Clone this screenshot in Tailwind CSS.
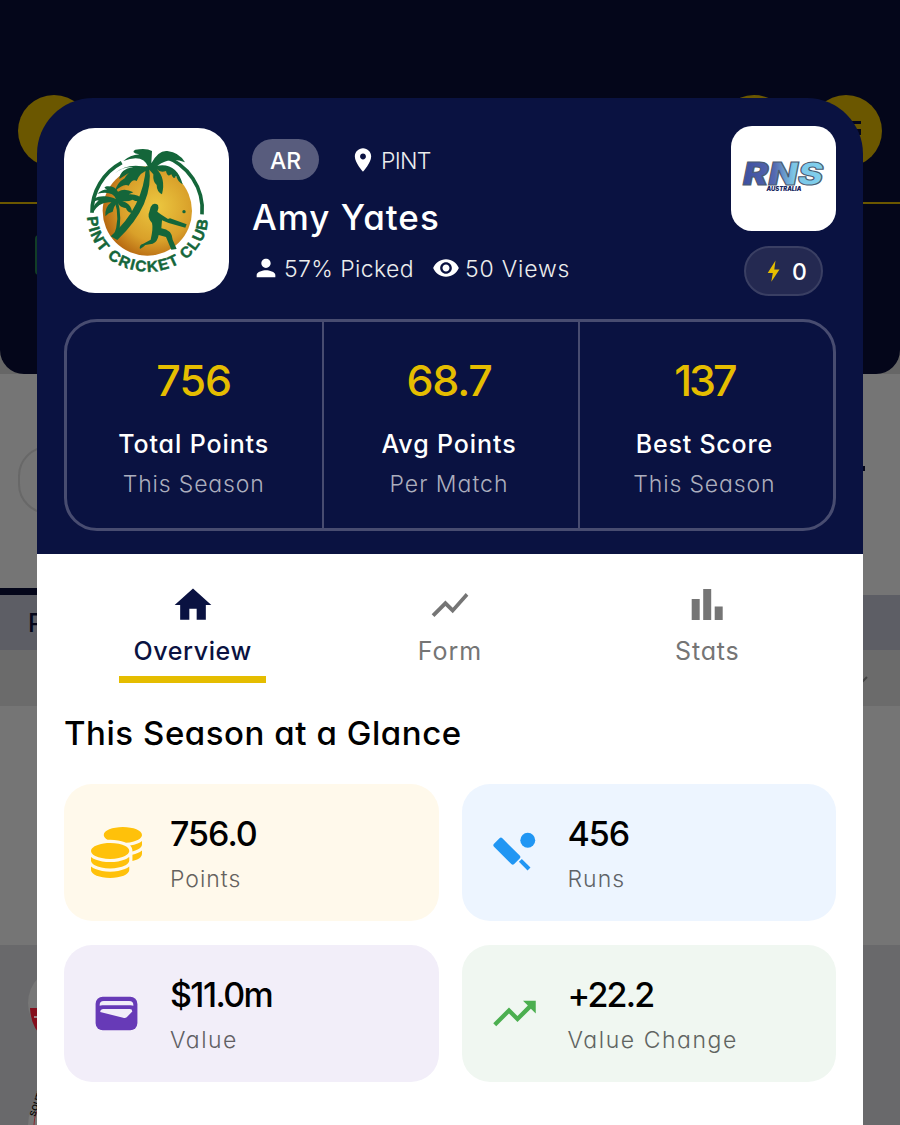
<!DOCTYPE html>
<html lang="en">
<head>
  <meta charset="UTF-8" />
  <meta name="viewport" content="width=device-width, initial-scale=1.0" />
  <title>Player Profile</title>
  <script src="https://cdn.jsdelivr.net/npm/@tailwindcss/browser@4"></script>
</head>
<body class="relative h-[1125px] w-[900px] overflow-hidden bg-[#757575] font-['Inter',sans-serif] [font-feature-settings:'cv11']">

  <!-- Dimmed page behind the sheet -->
  <div class="flex h-full flex-col">
    <div class="bg-[#666666]">
      <div class="relative h-[374px] rounded-b-3xl bg-[#04061a]">
        <div class="flex h-[204px] items-start border-b-2 border-[#6b5700] px-[18px] pt-[95px]">
          <div class="size-[72px] rounded-full bg-[#6b5700]"></div>
          <div class="-mt-[9px] ml-7 text-[34px] leading-[50px] font-medium tracking-[0.5px] text-[#777777]">My Team</div>
          <div class="ml-auto size-[72px] rounded-full bg-[#6b5700]"></div>
          <div class="ml-5 flex size-[72px] items-center justify-center rounded-full bg-[#6b5700]">
            <svg class="size-8" viewBox="0 0 32 32" fill="#04061a"><path d="M2 6h29v3H2zM2 14h29v6H2z" /></svg>
          </div>
        </div>
        <div class="mt-[31px] ml-[35px] h-10 w-20 rounded bg-[#123d26]"></div>
      </div>
    </div>
    <div class="flex h-[214px] justify-between px-[18px] pt-[72px]">
      <div class="h-[68px] w-[420px] rounded-[30px] border-2 border-[#686868]"></div>
      <div class="mt-5 h-[5px] w-[18px] -translate-x-[17px] bg-[#04061a]"></div>
    </div>
    <div class="h-[7px] w-1/2 bg-[#04061a]"></div>
    <div class="flex h-[55px] items-center bg-[#5d5e65] pt-1 pl-7 text-[25px] font-medium text-[#04061a]">Player</div>
    <div class="flex h-[57px] items-center justify-end bg-[#6b6b6b] pt-1.5 pr-8">
      <svg class="size-5" viewBox="0 0 20 20" fill="none" stroke="#444444" stroke-width="2"><path d="M4 7l7 7 8-8" /></svg>
    </div>
    <div class="h-[239px]"></div>
    <div class="flex-1 bg-[#69696b] px-7 pt-6">
      <svg class="h-[156px] w-20" viewBox="0 0 80 156">
        <circle cx="36" cy="34" r="36" fill="#777777" />
        <path d="M2 39h40v28H14Q3 58 2 39z" fill="#850f1c" />
        <path d="M6 48h8" stroke="#aaaaaa" stroke-width="1.5" />
        <circle cx="40" cy="156" r="40" fill="#777777" />
        <circle cx="40" cy="156" r="34" fill="none" stroke="#8d2a30" stroke-width="1" />
        <text transform="translate(7 148) rotate(-72)" font-family="Liberation Sans" font-size="8.5" font-weight="700" fill="#080808">SOUTH</text>
      </svg>
    </div>
  </div>

  <!-- Player sheet -->
  <div class="absolute top-[98px] left-[37px] flex h-[1027px] w-[826px] flex-col">
    <div class="h-[456px] rounded-t-[56px] bg-[#0a1241] px-[27px] pt-[30px]">
      <div class="flex items-start">
        <div class="flex size-[165px] items-center justify-center rounded-[31px] bg-white">
          <!-- Club crest -->
          <svg class="ml-0.5 h-[140px] w-[135px]" viewBox="0 0 405 420">
            <defs>
              <radialGradient id="sun" cx="0.6" cy="0.45" r="0.6">
                <stop offset="0" stop-color="#ecc840" />
                <stop offset="0.65" stop-color="#d9a02a" />
                <stop offset="1" stop-color="#b86a12" />
              </radialGradient>
              <path id="crest-arc" d="M22 228A181 166 0 0 0 384 224" />
            </defs>
            <circle cx="202" cy="210" r="134" fill="url(#sun)" />
            <path d="M36 215A168 168 0 0 1 125 65M250 46A168 168 0 0 1 366 220" fill="none" stroke="#14663a" stroke-width="11" />
            <g fill="#14663a">
              <path d="M207 76Q225 190 112 297L92 286Q190 200 198 76z" />
              <path transform="translate(0 -8)" d="M205 87Q190 45 130 68Q150 50 178 48Q150 42 166 34Q200 28 216 38L214 75Q235 35 262 38Q298 42 315 72Q270 54 232 82Q290 72 308 138Q292 128 288 112Q282 128 274 108Q262 118 258 98Q240 104 230 92Q258 120 246 168Q230 160 230 140Q218 130 220 108L208 94Q180 100 170 128Q158 120 146 142Q130 134 104 160Q112 132 134 120Q146 92 200 88Q165 88 118 122Q120 92 160 86Q130 84 105 105Q140 72 205 87z" />
              <path d="M104 180Q122 235 100 287L114 290Q128 230 113 178z" />
              <path d="M108 174Q98 148 52 158Q70 144 82 146Q66 140 80 136Q104 134 114 152Q134 140 160 154L146 160Q176 158 190 178Q170 184 158 176Q140 184 118 178Q156 186 156 216Q142 214 138 202Q120 200 112 184Q100 198 98 212Q86 214 76 226Q74 198 94 184Q58 180 38 216Q34 198 56 178Q44 178 34 190Q36 166 70 166Q84 164 108 174z" />
              <path d="M212 198Q220 182 234 192Q238 202 232 212L242 220L264 234L270 232L320 250L316 260L266 246L246 238L244 262Q276 266 278 296L290 324L274 326L258 288L236 282Q232 304 218 308L196 312Q188 320 180 324Q176 312 190 308L212 296Q220 262 216 246Q200 228 208 212z" />
              <circle cx="312" cy="212" r="5" />
            </g>
            <text font-family="Liberation Sans" font-size="46" font-weight="700" fill="#14663a" stroke="#14663a" stroke-width="1.5"><textPath href="#crest-arc" textLength="532">PINT CRICKET CLUB</textPath></text>
          </svg>
        </div>

        <div class="ml-[23px] flex flex-col pt-[11px] text-white">
          <div class="flex h-[41px] items-center">
            <div class="flex h-[41px] w-[67px] items-center justify-center rounded-full bg-[#585c7d] pt-1 text-[23px] font-medium">AR</div>
            <svg class="ml-[30px] size-7" viewBox="0 0 24 24" fill="currentColor"><path d="M12 2C8.13 2 5 5.13 5 9c0 5.25 7 13 7 13s7-7.75 7-13c0-3.87-3.13-7-7-7zm0 9.5c-1.38 0-2.5-1.12-2.5-2.5s1.12-2.5 2.5-2.5 2.5 1.12 2.5 2.5-1.12 2.5-2.5 2.5z" /></svg>
            <span class="ml-1 pt-1 text-[23px] font-light tracking-[-0.7px] text-[#eceded]">PINT</span>
          </div>
          <div class="mt-3 text-[35px] leading-[50px] font-medium tracking-[1px]">Amy Yates</div>
          <div class="mt-[10px] flex items-center leading-[34px] font-light text-[#eceded]">
            <svg class="-mt-0.5 size-7 text-white" viewBox="0 0 24 24" fill="currentColor"><path d="M12 12c2.21 0 4-1.79 4-4s-1.79-4-4-4-4 1.79-4 4 1.79 4 4 4zm0 2c-2.67 0-8 1.34-8 4v2h16v-2c0-2.66-5.33-4-8-4z" /></svg>
            <span class="ml-1 w-[131px] text-[23px] tracking-[0.4px] whitespace-nowrap">57% Picked</span>
            <svg class="-mt-0.5 ml-[17px] size-7 text-white" viewBox="0 0 24 24" fill="currentColor"><path d="M12 4.5C7 4.5 2.73 7.61 1 12c1.73 4.39 6 7.5 11 7.5s9.27-3.11 11-7.5c-1.73-4.39-6-7.5-11-7.5zM12 17c-2.76 0-5-2.24-5-5s2.24-5 5-5 5 2.24 5 5-2.24 5-5 5zm0-8c-1.66 0-3 1.34-3 3s1.34 3 3 3 3-1.34 3-3-1.34-3-3-3z" /></svg>
            <span class="ml-[5px] text-[23px] tracking-[0.8px]">50 Views</span>
          </div>
        </div>

        <div class="-mt-0.5 ml-auto flex flex-col items-center">
          <div class="flex size-[105px] items-center justify-center rounded-[21px] bg-white">
            <svg class="-mt-[7px] h-[50px] w-[95px]" viewBox="0 0 95 50">
              <defs>
                <linearGradient id="rns" x1="0" x2="1">
                  <stop offset="0" stop-color="#3d4fa0" />
                  <stop offset="0.38" stop-color="#5468b0" />
                  <stop offset="0.62" stop-color="#7cc6e6" />
                  <stop offset="1" stop-color="#80d0ee" />
                </linearGradient>
              </defs>
              <text x="7" y="35" textLength="80" lengthAdjust="spacingAndGlyphs" font-family="Inter" font-size="31" font-weight="900" font-style="italic" fill="url(#rns)" stroke="#4a5a70" stroke-width="1">RNS</text>
              <text x="30.5" y="40.5" textLength="35" lengthAdjust="spacingAndGlyphs" font-family="Inter" font-size="5.5" font-weight="900" font-style="italic" fill="#17265f">AUSTRALIA</text>
            </svg>
          </div>
          <div class="mt-[15px] flex h-[50px] w-[79px] items-center justify-center rounded-full border-2 border-[#3a3f63] bg-[#242951]">
            <svg class="size-7" viewBox="0 0 28 28" fill="#e5bd00"><path d="M15.5 3.500L7.700 16H12.800L11.300 24.800L19.500 12.500H14.300z" /></svg>
            <span class="ml-1 pt-0.5 text-[23px] font-medium text-white">0</span>
          </div>
        </div>
      </div>

      <!-- Headline numbers -->
      <div class="mt-[23px] grid h-[212px] grid-cols-3 rounded-[33px] border-[3px] border-[#484c70] text-center">
        <div class="pt-[34px] pr-0.5">
          <div class="text-[43px] leading-[48px] font-medium tracking-[-1px] text-[#e5bd00]">756</div>
          <div class="mt-[22px] text-[25px] leading-9 font-medium tracking-[0.9px] text-white">Total Points</div>
          <div class="mt-1.5 text-[23px] leading-8 font-light tracking-[0.85px] text-[#acaebe]">This Season</div>
        </div>
        <div class="border-l-2 border-[#484c70] pt-[34px] pr-1">
          <div class="text-[43px] leading-[48px] font-medium tracking-[-1.2px] text-[#e5bd00]">68.7</div>
          <div class="mt-[22px] text-[25px] leading-9 font-medium tracking-[0.9px] text-white">Avg Points</div>
          <div class="mt-1.5 text-[23px] leading-8 font-light tracking-[1px] text-[#acaebe]">Per Match</div>
        </div>
        <div class="border-l-2 border-[#484c70] pt-[34px] pr-1">
          <div class="text-[43px] leading-[48px] font-medium tracking-[-3px] text-[#e5bd00]">137</div>
          <div class="mt-[22px] text-[25px] leading-9 font-medium tracking-[0.8px] text-white">Best Score</div>
          <div class="mt-1.5 text-[23px] leading-8 font-light tracking-[0.85px] text-[#acaebe]">This Season</div>
        </div>
      </div>
    </div>

    <div class="flex-1 bg-white px-[27px] pt-7">
      <!-- Tabs -->
      <div class="grid grid-cols-3 text-[25px] leading-9 text-[#757575]">
        <div class="flex flex-col items-center font-medium text-[#0a1241]">
          <svg class="size-11 translate-y-px" viewBox="0 0 24 24" fill="currentColor"><path d="M10 20v-6h4v6h5v-8h3L12 3 2 12h3v8z" /></svg>
          <span class="mt-[7px] tracking-[0.6px]">Overview</span>
          <div class="mt-[7px] h-[7px] w-[147px] bg-[#e5bd00]"></div>
        </div>
        <div class="flex flex-col items-center">
          <svg class="size-11 translate-y-px" viewBox="0 0 24 24" fill="currentColor"><path d="M3.5 18.49l6-6.01 4 4L22 6.92l-1.41-1.41-7.09 7.97-4-4L2 16.99z" /></svg>
          <span class="mt-[7px] tracking-[1px]">Form</span>
        </div>
        <div class="flex flex-col items-center">
          <svg class="size-11" viewBox="0 0 44 44" fill="currentColor"><path d="M6.7 17h8v21h-8zM18.2 7h8v31h-8zM29.7 24.5h8V38h-8z" /></svg>
          <span class="mt-[7px] tracking-[0.8px]">Stats</span>
        </div>
      </div>

      <h2 class="mt-[26px] text-[33px] leading-[48px] font-medium tracking-[0.55px] text-black">This Season at a Glance</h2>

      <!-- Season cards -->
      <div class="mt-[27px] grid grid-cols-2 gap-x-[23px] gap-y-6">
        <div class="flex h-[137px] items-center gap-7 rounded-[28px] bg-[#fff9eb] pl-[27px]">
          <svg class="size-[51px]" viewBox="0 0 512 512" fill="#ffc10a"><path d="M512 80c0 18-14.3 34.6-38.4 48c-29.1 16.1-72.5 27.5-122.3 30.9c-3.7-1.8-7.4-3.5-11.3-5C300.6 137.4 248.2 128 192 128c-8.3 0-16.4 .2-24.5 .6l-1.1-.6C142.3 114.6 128 98 128 80c0-44.2 86-80 192-80S512 35.8 512 80zM160.7 161.1c10.2-.7 20.7-1.1 31.3-1.1c62.2 0 117.4 12.3 152.5 31.4C369.3 204.9 384 221.7 384 240c0 4-.7 7.9-2.1 11.7c-4.6 13.2-17 25.3-35 35.5c-.5 .2-.9 .5-1.3 .8c-35 19.4-90.8 32-153.6 32c-59.6 0-112.9-11.3-148.2-29.1c-1.9-.9-3.7-1.9-5.5-2.9C14.3 274.6 0 258 0 240c0-34.8 53.4-64.5 128-75.4c10.5-1.5 21.4-2.7 32.7-3.5zM416 240c0-21.9-10.6-39.9-24.1-53.4c28.3-4.4 54.2-11.4 76.2-20.5c16.3-6.8 31.5-15.2 43.9-25.5V176c0 19.3-16.5 37.1-43.8 50.9c-14.6 7.4-32.4 13.7-52.4 18.5c.1-1.8 .2-3.5 .2-5.3zm-32 96c0 18-14.3 34.6-38.4 48c-1.8 1-3.6 1.9-5.5 2.9C304.9 404.7 251.6 416 192 416c-62.8 0-118.6-12.6-153.6-32C14.3 370.6 0 354 0 336V300.6c12.5 10.3 27.6 18.7 43.9 25.5C83.4 342.6 135.8 352 192 352s108.6-9.4 148.1-25.9c7.8-3.2 15.3-6.9 22.4-10.9c6.1-3.4 11.8-7.2 17.2-11.2c1.5-1.1 2.9-2.3 4.3-3.4V336zm32 0V278.1c19-4.2 36.5-9.5 52.1-16c16.3-6.8 31.5-15.2 43.9-25.5V272c0 10.5-5 21-14.9 30.9c-16.3 16.3-45 29.7-81.3 38.4c.1-1.7 .2-3.5 .2-5.3zM192 448c56.2 0 108.6-9.4 148.1-25.9c16.3-6.8 31.5-15.2 43.9-25.5V432c0 44.2-86 80-192 80S0 476.2 0 432V396.6c12.5 10.3 27.6 18.7 43.9 25.5C83.4 438.6 135.8 448 192 448z" /></svg>
          <div>
            <div class="text-[34px] leading-[48px] font-medium tracking-[-1px] text-black">756.0</div>
            <div class="mt-[5px] text-[23px] leading-8 font-light tracking-[1px] text-[#65625e]">Points</div>
          </div>
        </div>
        <div class="flex h-[137px] items-center gap-7 rounded-[28px] bg-[#edf5ff] pl-[27px]">
          <svg class="size-[51px] translate-y-0.5" viewBox="0 0 50 50" fill="#2196f3">
            <rect x="-14" y="-5.8" width="28" height="11.6" rx="2" transform="translate(17.5 21.7) rotate(45)" />
            <rect x="-6" y="-2" width="12" height="4" transform="translate(35 35) rotate(45)" />
            <circle cx="38" cy="11" r="7.3" />
          </svg>
          <div>
            <div class="text-[34px] leading-[48px] font-medium tracking-[-1px] text-black">456</div>
            <div class="mt-[5px] text-[23px] leading-8 font-light tracking-[1px] text-[#5f6367]">Runs</div>
          </div>
        </div>
        <div class="flex h-[137px] items-center gap-7 rounded-[28px] bg-[#f2eef9] pl-[27px]">
          <svg class="size-[51px]" viewBox="0 0 50 50">
            <rect x="4.5" y="8.6" width="41" height="32.8" rx="7" fill="#673ab7" />
            <path d="M8.500 17.500V16.500Q8.500 12.700 12.500 12.700H37.500Q41.500 12.700 41.500 16.500V17.500Q40.500 16.800 39 16.800H11Q9.500 16.800 8.500 17.500zM12 20.700H38Q40.500 20.700 40.500 23L35 28.700Q33.500 30 31.500 29.200L9 23.500Q9.500 20.700 12 20.700z" fill="#f2eef9" />
          </svg>
          <div>
            <div class="text-[34px] leading-[48px] font-medium tracking-[-1.6px] text-black">$11.0m</div>
            <div class="mt-[5px] text-[23px] leading-8 font-light tracking-[1.5px] text-[#615f64]">Value</div>
          </div>
        </div>
        <div class="flex h-[137px] items-center gap-7 rounded-[28px] bg-[#f0f7f1] pl-[27px]">
          <svg class="size-[51px]" viewBox="0 0 24 24" fill="#4caf50"><path d="M16 6l2.29 2.29-4.88 4.88-4-4L2 16.59 3.41 18l6-6 4 4 6.3-6.29L22 12V6z" /></svg>
          <div>
            <div class="text-[34px] leading-[48px] font-medium tracking-[-1.8px] text-black">+22.2</div>
            <div class="mt-[5px] text-[23px] leading-8 font-light tracking-[1.55px] text-[#606461]">Value Change</div>
          </div>
        </div>
      </div>
    </div>
  </div>
</body>
</html>
